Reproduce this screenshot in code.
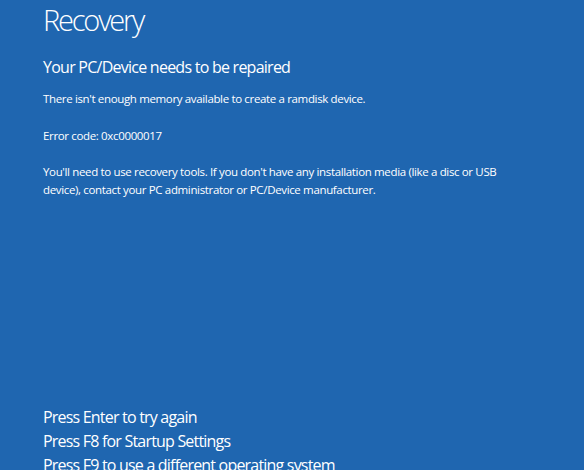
export default function App() {
  return (
    <div
      className="h-[470px] w-[584px] overflow-hidden bg-[#1f66b0] pl-[43px] text-white"
      style={{ fontFamily: '"Open Sans", "Noto Sans", sans-serif' }}
    >
      <h1 className="pt-[2px] text-[29px] leading-[36px] font-light tracking-[-2.2px]">Recovery</h1>
      <h2 className="mt-[18px] text-[16px] leading-[22px] font-normal tracking-[-0.75px]">
        Your PC/Device needs to be repaired
      </h2>

      <div className="mt-[12px] text-[11.5px] leading-[18px] tracking-[-0.35px]">
        <p>There isn't enough memory available to create a ramdisk device.</p>
        <p className="mt-[19px]">Error code: 0xc0000017</p>
        <p className="mt-[18px] w-[460px]">
          You'll need to use recovery tools. If you don't have any installation media (like a disc or USB
          device), contact your PC administrator or PC/Device manufacturer.
        </p>
      </div>

      <div className="mt-[206px] text-[16px] leading-[24px] tracking-[-0.8px]">
        <p>Press Enter to try again</p>
        <p>Press F8 for Startup Settings</p>
        <p>Press F9 to use a different operating system</p>
      </div>
    </div>
  );
}
